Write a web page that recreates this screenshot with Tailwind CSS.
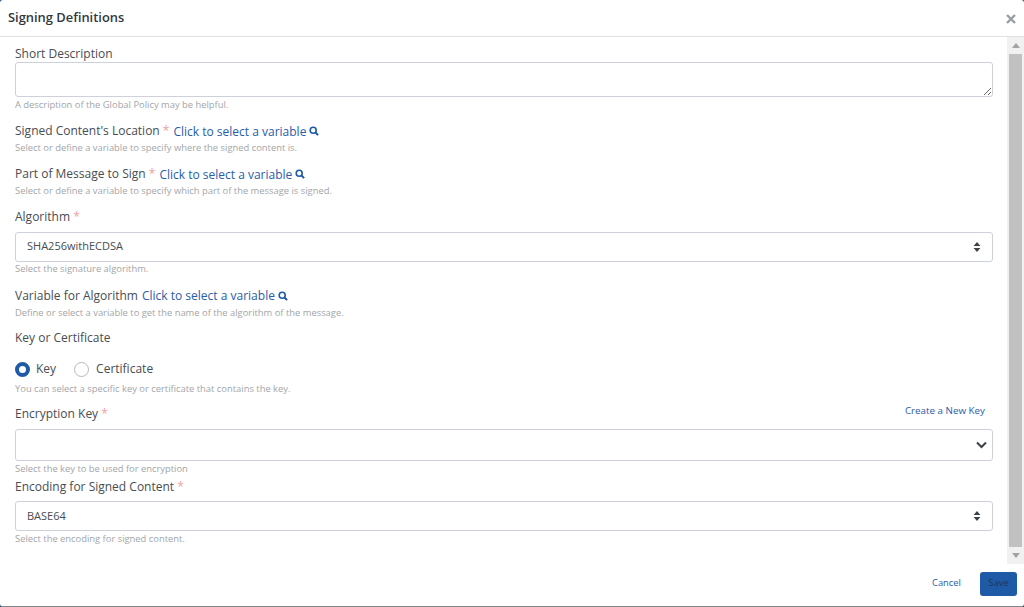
<!DOCTYPE html>
<html lang="en">
<head>
  <meta charset="UTF-8">
  <title>Signing Definitions</title>
  <script src="https://cdn.jsdelivr.net/npm/@tailwindcss/browser@4"></script>
</head>
<body class="bg-[#2a4f78] overflow-hidden font-['Open_Sans',sans-serif] text-[#484d52]">
  <div class="w-[1024px] h-[607px] flex flex-col bg-white border-b border-[#7f8587] rounded-[3px]">
    <header class="h-[37px] shrink-0 flex items-center justify-between pl-2 pr-[7px] border-b border-[#dde0e6]">
      <h1 class="text-[12.9px] font-semibold text-[#33383d]">Signing Definitions</h1>
      <svg class="w-[12px] h-[12px] mt-[2px]" viewBox="0 0 12 12"><path d="M2 2l8 8M10 2l-8 8" stroke="#9a9ea3" stroke-width="2.4"/></svg>
    </header>

    <div class="h-[527px] shrink-0 flex">
      <main class="flex-1 pl-[15px] pr-[14px] overflow-hidden">
        <label class="block h-[25px] pt-[8px] text-[12px] leading-[17px]">Short Description</label>
        <textarea class="block w-full h-[35px] border border-[#ced1da] rounded-[3px]"></textarea>
        <p class="h-[14px] mt-[1px] text-[9.4px] leading-[14px] text-[#a3a6aa]">A description of the Global Policy may be helpful.</p>

        <div class="mt-[10px] h-[17px] flex items-center gap-[4px] text-[12px] leading-[17px]">
          <span>Signed Content's Location <span class="text-[#f0a0a0]">*</span></span>
          <a class="text-[#2a5ca8] flex items-center gap-[3px] mt-[1px]">Click to select a variable
            <svg class="w-[10px] h-[10px]" viewBox="0 0 10 10" fill="none" stroke="#1f5aa6"><circle cx="4.2" cy="4.2" r="3" stroke-width="1.6"/><path d="M6.5 6.5l2.6 2.6" stroke-width="2"/></svg>
          </a>
        </div>
        <p class="h-[14px] text-[9.4px] leading-[14px] text-[#a3a6aa] mt-[2px]">Select or define a variable to specify where the signed content is.</p>

        <div class="mt-[10px] h-[17px] flex items-center gap-[4px] text-[12px] leading-[17px]">
          <span>Part of Message to Sign <span class="text-[#f0a0a0]">*</span></span>
          <a class="text-[#2a5ca8] flex items-center gap-[3px] mt-[1px]">Click to select a variable
            <svg class="w-[10px] h-[10px]" viewBox="0 0 10 10" fill="none" stroke="#1f5aa6"><circle cx="4.2" cy="4.2" r="3" stroke-width="1.6"/><path d="M6.5 6.5l2.6 2.6" stroke-width="2"/></svg>
          </a>
        </div>
        <p class="h-[14px] text-[9.4px] leading-[14px] text-[#a3a6aa] mt-[2px]">Select or define a variable to specify which part of the message is signed.</p>

        <label class="block mt-[10px] h-[17px] text-[12px] leading-[17px]">Algorithm <span class="text-[#f0a0a0]">*</span></label>
        <div class="mt-[7px] h-[30px] flex items-center justify-between pl-[11px] pr-[11px] pb-[2px] border border-[#ced1da] rounded-[3px] text-[11px]">
          <span>SHA256withECDSA</span>
          <svg class="w-[8px] h-[12px] mt-[2px]" viewBox="0 0 8 12" fill="#3c4247"><path d="M4 1l3.4 4H.6zM4 11L.6 7h6.8z"/></svg>
        </div>
        <p class="h-[14px] text-[9.4px] leading-[14px] text-[#a3a6aa]">Select the signature algorithm.</p>

        <div class="mt-[11px] h-[17px] flex items-center gap-[4px] text-[12px] leading-[17px]">
          <span>Variable for Algorithm</span>
          <a class="text-[#2a5ca8] flex items-center gap-[3px]">Click to select a variable
            <svg class="w-[10px] h-[10px]" viewBox="0 0 10 10" fill="none" stroke="#1f5aa6"><circle cx="4.2" cy="4.2" r="3" stroke-width="1.6"/><path d="M6.5 6.5l2.6 2.6" stroke-width="2"/></svg>
          </a>
        </div>
        <p class="h-[14px] text-[9.4px] leading-[14px] text-[#a3a6aa] mt-[2px]">Define or select a variable to get the name of the algorithm of the message.</p>

        <label class="block mt-[9px] h-[17px] text-[12px] leading-[17px]">Key or Certificate</label>
        <div class="mt-[15px] h-[16px] flex items-center text-[12px]">
          <span class="w-[15px] h-[15px] rounded-full border-[4px] border-[#1f5aa6] bg-white"></span>
          <span class="ml-[6px]">Key</span>
          <span class="ml-[18px] w-[15px] h-[15px] rounded-full border border-[#b4b7bd] bg-white"></span>
          <span class="ml-[7px]">Certificate</span>
        </div>
        <p class="h-[14px] mt-[5px] text-[9.4px] leading-[14px] text-[#a3a6aa]">You can select a specific key or certificate that contains the key.</p>

        <div class="mt-[9px] h-[17px] flex justify-between text-[12px] leading-[17px]">
          <label>Encryption Key <span class="text-[#f0a0a0]">*</span></label>
          <a class="pr-[8px] -mt-[3px] text-[9.8px] font-medium text-[#2a5ca8]">Create a New Key</a>
        </div>
        <div class="mt-[7px] h-[32px] flex items-center justify-end pr-[5px] border border-[#ced1da] rounded-[3px]">
          <svg class="w-[11px] h-[8px]" viewBox="0 0 11 8" fill="none" stroke="#3c4247" stroke-width="2"><path d="M1 1.500l4.500 4.500 4.500-4.500"/></svg>
        </div>
        <p class="h-[14px] mt-[1px] text-[9.4px] leading-[14px] text-[#a3a6aa]">Select the key to be used for encryption</p>

        <label class="block mt-[2px] h-[17px] text-[12px] leading-[17px]">Encoding for Signed Content <span class="text-[#f0a0a0]">*</span></label>
        <div class="mt-[6px] h-[30px] flex items-center justify-between pl-[11px] pr-[11px] border border-[#ced1da] rounded-[3px] text-[11px]">
          <span>BASE64</span>
          <svg class="w-[8px] h-[12px]" viewBox="0 0 8 12" fill="#3c4247"><path d="M4 1l3.400 4H.6zM4 11L.6 7h6.800z"/></svg>
        </div>
        <p class="h-[14px] mt-[1px] text-[9.4px] leading-[14px] text-[#a3a6aa]">Select the encoding for signed content.</p>
      </main>

      <div class="w-[17px] shrink-0 flex flex-col bg-[#f1f1f1] pl-[2px] pr-[2px]">
        <div class="h-[17px] flex items-center justify-center">
          <svg class="w-[8px] h-[5px]" viewBox="0 0 8 5" fill="#a3a3a3"><path d="M4 0l4 5H0z"/></svg>
        </div>
        <div class="flex-1 bg-[#c1c1c1]"></div>
        <div class="h-[17px] flex items-center justify-center">
          <svg class="w-[8px] h-[5px]" viewBox="0 0 8 5" fill="#a3a3a3"><path d="M4 5l4-5H0z"/></svg>
        </div>
      </div>
    </div>

    <footer class="flex-1 flex items-center justify-end pr-[7px] pb-[3px] gap-[19px]">
      <a class="text-[9.4px] font-medium text-[#2a5ca8]">Cancel</a>
      <button class="w-[37px] h-[24px] rounded-[3px] bg-[#1f5aa6] text-[9.4px] text-[#1e3556]">Save</button>
    </footer>
  </div>
</body>
</html>
